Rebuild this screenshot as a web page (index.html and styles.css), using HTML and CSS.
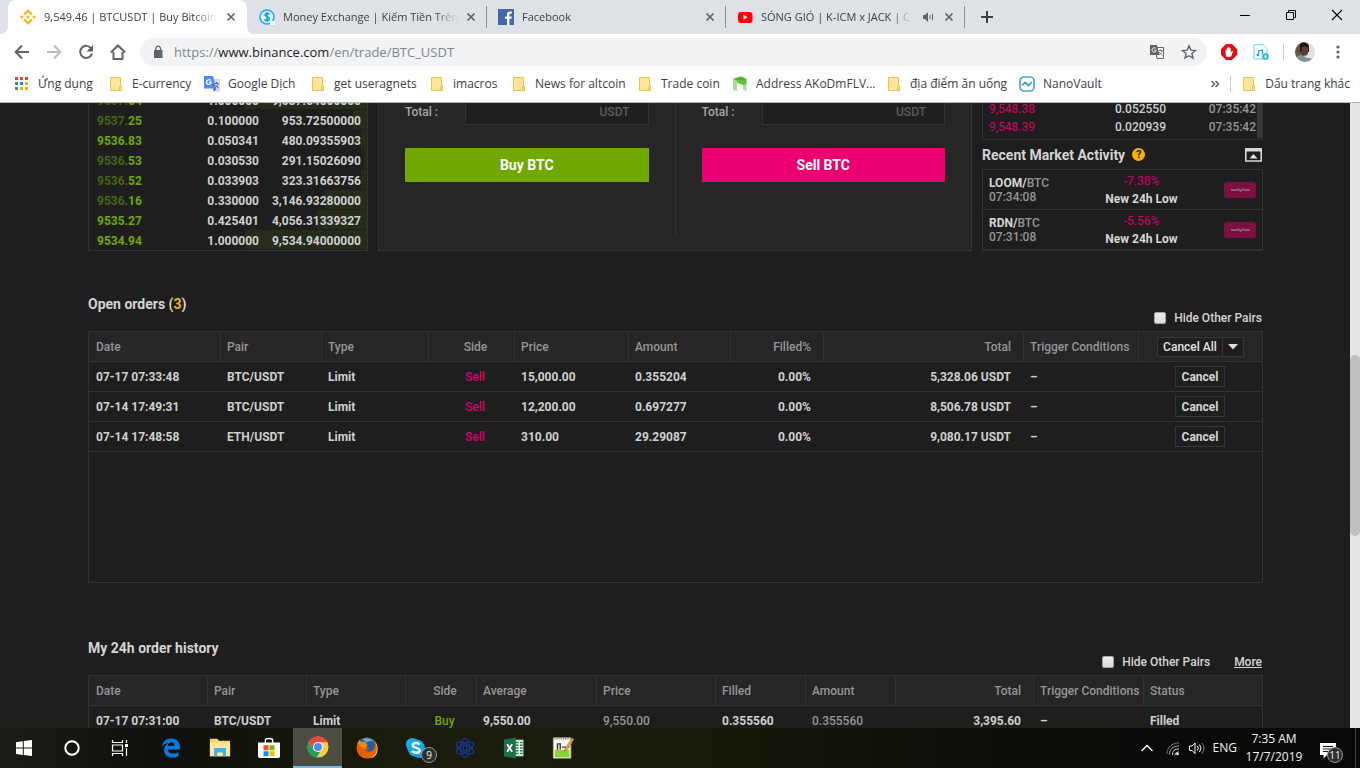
FILE: index.html
```html
<!DOCTYPE html>
<html lang="vi">
<head>
<meta charset="utf-8">
<title>9,549.46 | BTCUSDT | Buy Bitcoin</title>
<link rel="stylesheet" href="styles.css">
</head>
<body>
<svg class="defs" aria-hidden="true">
  <symbol id="close" viewBox="0 0 10 10"><path d="M1.5 1.5l7 7M8.500 1.500l-7 7" stroke="#5f6368" stroke-width="1.700"/></symbol>
  <symbol id="folder" viewBox="0 0 16 16"><path d="M2.500 1.500h10v9h1v4h-11z" fill="#ffe69a" stroke="#e9c34c"/><path d="M11.500 10.500h2v4h-2z" fill="#ffe69a" stroke="#e9c34c"/></symbol>
</svg>

<header class="browser">
  <div class="tabstrip">
    <div class="tab active">
      <svg class="i16" viewBox="0 0 16 16" fill="#f3ba2f"><path d="M8 0l4.800 4.800-1.800 1.800-3-3-3 3-1.800-1.800zM8 16l-4.800-4.800 1.800-1.800 3 3 3-3 1.800 1.800zM8 6.100l1.900 1.900L8 9.900 6.100 8zM1.900 6.100L3.800 8 1.900 9.900 0 8zM14.100 6.100L16 8l-1.900 1.900L12.200 8z"/></svg>
      <span class="tab-title">9,549.46 | BTCUSDT | Buy Bitcoin</span>
      <button class="x" aria-label="Close tab"><svg><use href="#close"/></svg></button>
    </div>
    <div class="tab">
      <svg class="i16" viewBox="0 0 16 16"><circle cx="8" cy="8" r="7" fill="#e9f7ff" stroke="#1ba7f5" stroke-width="1.500"/><path d="M10.500 5.500C9.500 4 6 4.200 6 6s4.500 1.700 4.500 3.800-4 2.200-5 .5M8 3v10" fill="none" stroke="#0b9bf0" stroke-width="1.500"/><path d="M11 12h5v4h-5z" fill="#fff"/></svg>
      <span class="tab-title">Money Exchange | Kiếm Tiền Trên</span>
      <button class="x" aria-label="Close tab"><svg><use href="#close"/></svg></button>
    </div>
    <div class="tab">
      <svg class="i16" viewBox="0 0 16 16"><path fill="#4267b2" d="M0 0h16v16H0z"/><path fill="#fff" d="M9 16V9.800H7V7.400h2V5.500C9 3.500 10.200 2.500 12 2.500h1.800v2.200h-1.200c-1 0-1.200.5-1.200 1.200v1.500h2.400l-.3 2.400h-2.100V16z"/></svg>
      <span class="tab-title">Facebook</span>
      <button class="x" aria-label="Close tab"><svg><use href="#close"/></svg></button>
    </div>
    <div class="tab">
      <svg class="i16" viewBox="0 0 16 16"><rect x="1" y="3" width="14.500" height="11" rx="3" fill="#f00"/><path d="M6.500 5.800v5l4-2.500z" fill="#fff"/></svg>
      <span class="tab-title">SÓNG GIÓ | K-ICM x JACK | C</span>
      <svg class="snd" viewBox="0 0 12 12"><path d="M1 4h2l3-3v10L3 8H1z" fill="#5f6368"/><path d="M8 4v4M10.500 3v6" stroke="#5f6368"/></svg>
      <button class="x" aria-label="Close tab"><svg><use href="#close"/></svg></button>
    </div>
    <button class="newtab" aria-label="New tab"><svg class="i16" viewBox="0 0 16 16"><path d="M8 2v12M2 8h12" stroke="#3c4043" stroke-width="2"/></svg></button>
    <div class="winctl">
      <button aria-label="Minimize"><svg viewBox="0 0 12 12"><path d="M1 6.500h10" stroke="#000"/></svg></button>
      <button aria-label="Restore"><svg viewBox="0 0 12 12"><path d="M1.500 3.500h7v7h-7zM3.500 3V1.500h7v7H9" fill="none" stroke="#000"/></svg></button>
      <button aria-label="Close"><svg viewBox="0 0 12 12"><path d="M1 1l10 10M11 1L1 11" stroke="#000" stroke-width="1.100"/></svg></button>
    </div>
  </div>

  <div class="toolbar">
    <button aria-label="Back"><svg class="i16" viewBox="0 0 16 16"><path d="M15 8H2M8 1.500L1.700 8 8 14.500" fill="none" stroke="#5f6368" stroke-width="2"/></svg></button>
    <button aria-label="Forward"><svg class="i16" viewBox="0 0 16 16"><path d="M1 8h13M8 1.500L14.300 8 8 14.500" fill="none" stroke="#babcbe" stroke-width="2"/></svg></button>
    <button aria-label="Reload"><svg class="i16" viewBox="0 0 16 16"><path d="M13.200 4.500A6 6 0 1 0 14 9.500" fill="none" stroke="#5f6368" stroke-width="2"/><path d="M15 1v6.500H8.500z" fill="#5f6368"/></svg></button>
    <button aria-label="Home"><svg class="i16" viewBox="0 0 16 16"><path d="M3.500 8v7h9V8M.8 8.500L8 1.500l7.200 7" fill="none" stroke="#5f6368" stroke-width="2"/></svg></button>
    <div class="omnibox">
      <svg class="lock" viewBox="0 0 10 14"><path d="M1 5h8.500v8H1z" fill="#5f6368"/><path d="M2.900 6V3.500a2.300 2.300 0 0 1 4.600 0V6" fill="none" stroke="#5f6368" stroke-width="1.300"/></svg>
      <span class="url">https://<b>www.binance.com</b>/en/trade/BTC_USDT</span>
      <svg class="i16" viewBox="0 0 16 16"><path d="M6 3.500h8.500v11H8z" fill="#fff" stroke="#5f6368"/><path d="M1 1h7l2.500 10H1z" fill="#5f6368"/><path d="M7 4.500C6 3.300 3 3.500 3 6s3.500 3 4.200.2H5.500" fill="none" stroke="#fff"/><path d="M9.500 6.500h4M11.500 5.500v1M13 7c-.5 2-2 3.500-3.500 4M10 8l3.500 3.500" fill="none" stroke="#5f6368" stroke-width=".9"/></svg>
      <svg class="i16" viewBox="0 0 16 16"><path d="M8 1.800l1.800 4.300 4.700.4-3.600 3 1.100 4.600L8 11.700l-4 2.400 1.100-4.600-3.600-3 4.700-.4z" fill="none" stroke="#5f6368" stroke-width="1.400"/></svg>
    </div>
    <div class="exts">
      <svg class="i16" viewBox="0 0 16 16"><path d="M5 0h6l5 5v6l-5 5H5l-5-5V5z" fill="#e40d0d"/><path d="M4.500 6.500c0-1 1.200-1 1.200 0V4.300c0-1 1.300-1 1.300 0V3.500c0-1 1.400-1 1.400 0v1c0-1 1.300-1 1.300 0v4l1-1.200c.6-.8 1.500-.2 1.200.5L10.300 12c-.8 1.500-4.600 1.500-5.300 0-.4-1-.5-3-.5-5.500z" fill="#fff"/></svg>
      <svg class="i16" viewBox="0 0 16 16"><path d="M1 .7h9l4 4V15H1z" fill="#f4fdff" stroke="#6ad4ee"/><path d="M5.500 11V7l4-1v4" fill="none" stroke="#16a9d8" stroke-width="1.200"/><circle cx="4.800" cy="11" r="1.300" fill="#16a9d8"/><circle cx="12.500" cy="12.500" r="3.300" fill="#16bce8"/><path d="M12.500 14.500l-2-2h1.300V11h1.400v1.500h1.300z" fill="#fff"/></svg>
      <i class="sep"></i>
      <svg class="avatar" viewBox="0 0 20 20"><clipPath id="av"><circle cx="10" cy="10" r="10"/></clipPath><g clip-path="url(#av)"><path fill="#e6e0d8" d="M0 0h20v20H0z"/><path d="M0 0h9v15H0z" fill="#665544"/><path d="M5 2c2-3 9-2 9 3v5H5z" fill="#1d1513"/><path d="M6.500 6c1-2 6-2 6.500 0v5c0 3-5 4-6.500 1z" fill="#5d3d33"/><path d="M1 20c0-7 4-8 7-6.500l3 2 5 1 4 5z" fill="#7d929b"/></g></svg>
      <button aria-label="Menu"><svg class="i16" viewBox="0 0 16 16" fill="#5f6368"><circle cx="8" cy="3" r="1.600"/><circle cx="8" cy="8" r="1.600"/><circle cx="8" cy="13" r="1.600"/></svg></button>
    </div>
  </div>

  <nav class="bookmarks">
    <div class="marks">
      <a href="#"><svg class="i16" viewBox="0 0 16 16"><path d="M1 1h3v3H1zM6 1h3v3H6zM11 1h3v3h-3z" fill="#ea4335"/><path d="M1 6h3v3H1zM1 11h3v3H1z" fill="#34a153"/><path d="M6 6h3v3H6z" fill="#1a84f5"/><path d="M11 6h3v3h-3zM6 11h3v3H6zM11 11h3v3h-3z" fill="#fbb008"/></svg>Ứng dụng</a>
      <a href="#"><svg class="i16"><use href="#folder"/></svg>E-currency</a>
      <a href="#"><svg class="i16" viewBox="0 0 16 16"><path d="M7 3h9v12.500H9z" fill="#d8d8d8"/><path d="M0 0h9l3 12.500H0z" fill="#4a8af4"/><path d="M9.500 12.500h3L10 15.500z" fill="#2a56c6"/><path d="M7 4.500C5.500 3 2.500 3.600 2.500 6.200S6.600 9.500 7.200 6.400H5" fill="none" stroke="#fff" stroke-width="1.200"/><path d="M10.500 7.500h4M12.500 6v1.500M14 8c-.5 2-1.500 3-2.500 3.500M11.500 9l3 3" fill="none" stroke="#667"/></svg>Google Dịch</a>
      <a href="#"><svg class="i16"><use href="#folder"/></svg>get useragnets</a>
      <a href="#"><svg class="i16"><use href="#folder"/></svg>imacros</a>
      <a href="#"><svg class="i16"><use href="#folder"/></svg>News for altcoin</a>
      <a href="#"><svg class="i16"><use href="#folder"/></svg>Trade coin</a>
      <a href="#"><svg class="i16" viewBox="0 0 16 16"><path d="M1 3l8-2.500L14.500 3v12l-3.500-1.500V8L5 6.500V15l-4-1z" fill="#a9dd93"/><path d="M1 3l8-2.500L14.500 3 11 5 5 4.500z" fill="#4fb32a"/><path d="M5 4.500L11 5l3.500-2v5L11 9 5 6.500z" fill="#5fc238"/></svg>Address AKoDmFLV...</a>
      <a href="#"><svg class="i16"><use href="#folder"/></svg>địa điểm ăn uống</a>
      <a href="#"><svg class="i16" viewBox="0 0 16 16"><rect x="1" y="1" width="14" height="14" rx="4" fill="#fff" stroke="#4aa9c9" stroke-width="1.700"/><path d="M3 9.500l3-3 3.500 3 3.500-3.500" fill="none" stroke="#3a9fc2" stroke-width="1.700"/></svg>NanoVault</a>
    </div>
    <button class="more-marks" aria-label="More bookmarks"><svg viewBox="0 0 10 10"><path d="M1.500 2l3 3-3 3M5.500 2l3 3-3 3" fill="none" stroke="#5f6368" stroke-width="1.500"/></svg></button>
    <i class="sep"></i>
    <a href="#"><svg class="i16"><use href="#folder"/></svg>Dấu trang khác</a>
  </nav>
</header>

<div class="viewport">
<main class="page">
  <section class="top">
    <div class="panel book">
      <div class="bid" style="background-size:44% 100%"><span class="px"><s>9537.</s>64</span><span>1.000000</span><span>9,537.64000000</span></div>
      <div class="bid" style="background-size:5% 100%"><span class="px"><s>9537.</s>25</span><span>0.100000</span><span>953.72500000</span></div>
      <div class="bid" style="background-size:2% 100%"><span class="px">9536.83</span><span>0.050341</span><span>480.09355903</span></div>
      <div class="bid" style="background-size:1% 100%"><span class="px"><s>9536.</s>53</span><span>0.030530</span><span>291.15026090</span></div>
      <div class="bid" style="background-size:2% 100%"><span class="px"><s>9536.</s>52</span><span>0.033903</span><span>323.31663756</span></div>
      <div class="bid" style="background-size:15% 100%"><span class="px"><s>9536.</s>16</span><span>0.330000</span><span>3,146.93280000</span></div>
      <div class="bid" style="background-size:18% 100%"><span class="px">9535.27</span><span>0.425401</span><span>4,056.31339327</span></div>
      <div class="bid" style="background-size:44% 100%"><span class="px">9534.94</span><span>1.000000</span><span>9,534.94000000</span></div>
    </div>

    <div class="panel trade">
      <form class="order">
        <div class="field"><label for="buy-total">Total :</label><input id="buy-total" type="text" placeholder="USDT"></div>
        <button type="button" class="buy">Buy BTC</button>
      </form>
      <i class="divider"></i>
      <form class="order">
        <div class="field"><label for="sell-total">Total :</label><input id="sell-total" type="text" placeholder="USDT"></div>
        <button type="button" class="sell">Sell BTC</button>
      </form>
    </div>

    <div class="side">
      <div class="panel trades">
        <div class="fills">
          <div><span class="red">9,548.38</span><span>0.052550</span><time>07:35:42</time></div>
          <div><span class="red">9,548.39</span><span>0.020939</span><time>07:35:42</time></div>
        </div>
        <i class="bar"></i>
      </div>
      <div class="side-head">
        <h2>Recent Market Activity</h2>
        <span class="help">?</span>
        <button aria-label="Collapse"><svg viewBox="0 0 17 14"><path d="M.8 1h15.400v12H.8z" fill="none" stroke="#d6d6d6" stroke-width="1.600"/><path d="M0 0h17v3.500H0z" fill="#d6d6d6"/><path d="M4.500 10.500l4-4.500 4 4.500z" fill="#e6e6e6"/></svg></button>
      </div>
      <div class="panel activity">
        <div class="act"><p><b>LOOM/</b>BTC<br>07:34:08</p><p class="mid"><span class="red">-7.38%</span><b>New 24h Low</b></p><svg class="badge" viewBox="0 0 32 16"><rect width="32" height="16" rx="3" fill="#7b1041"/><path d="M7 8h6l1.500-1 2 2.500 2-2.500L20 8h6" fill="none" stroke="#8f7480" stroke-width="1.300"/></svg></div>
        <div class="act"><p><b>RDN/</b>BTC<br>07:31:08</p><p class="mid"><span class="red">-5.56%</span><b>New 24h Low</b></p><svg class="badge" viewBox="0 0 32 16"><rect width="32" height="16" rx="3" fill="#7b1041"/><path d="M7 8h6l1.500-1 2 2.500 2-2.500L20 8h6" fill="none" stroke="#8f7480" stroke-width="1.300"/></svg></div>
      </div>
    </div>
  </section>

  <section class="orders">
    <div class="head">
      <h2>Open orders (<em>3</em>)</h2>
      <div class="tools"><label><input type="checkbox">Hide Other Pairs</label></div>
    </div>
    <div class="panel box">
      <table>
        <colgroup><col class="w131"><col class="w101"><col class="w107"><col class="w86"><col class="w114"><col class="w102"><col class="w93"><col class="w200"><col class="w115"><col></colgroup>
        <thead><tr><th>Date</th><th>Pair</th><th>Type</th><th class="c">Side</th><th>Price</th><th>Amount</th><th class="r">Filled%</th><th class="r">Total</th><th>Trigger Conditions</th><th class="act-col"><div class="split"><button>Cancel All</button><button aria-label="Cancel options"><svg viewBox="0 0 10 6"><path d="M0 0h10L5 5.500z" fill="#e0e0e0"/></svg></button></div></th></tr></thead>
        <tbody>
          <tr><td>07-17 07:33:48</td><td>BTC/USDT</td><td>Limit</td><td class="c red">Sell</td><td>15,000.00</td><td>0.355204</td><td class="r">0.00%</td><td class="r">5,328.06 USDT</td><td>–</td><td class="act-col"><button class="cancel">Cancel</button></td></tr>
          <tr><td>07-14 17:49:31</td><td>BTC/USDT</td><td>Limit</td><td class="c red">Sell</td><td>12,200.00</td><td>0.697277</td><td class="r">0.00%</td><td class="r">8,506.78 USDT</td><td>–</td><td class="act-col"><button class="cancel">Cancel</button></td></tr>
          <tr><td>07-14 17:48:58</td><td>ETH/USDT</td><td>Limit</td><td class="c red">Sell</td><td>310.00</td><td>29.29087</td><td class="r">0.00%</td><td class="r">9,080.17 USDT</td><td>–</td><td class="act-col"><button class="cancel">Cancel</button></td></tr>
        </tbody>
      </table>
    </div>
  </section>

  <section class="orders history">
    <div class="head">
      <h2>My 24h order history</h2>
      <div class="tools"><label><input type="checkbox">Hide Other Pairs</label><a href="#">More</a></div>
    </div>
    <div class="panel box">
      <table>
        <colgroup><col class="w118"><col class="w99"><col class="w99"><col class="w71"><col class="w120"><col class="w119"><col class="w90"><col class="w90"><col class="w138"><col class="w110"><col></colgroup>
        <thead><tr><th>Date</th><th>Pair</th><th>Type</th><th class="c">Side</th><th>Average</th><th>Price</th><th>Filled</th><th>Amount</th><th class="r">Total</th><th>Trigger Conditions</th><th>Status</th></tr></thead>
        <tbody><tr><td>07-17 07:31:00</td><td>BTC/USDT</td><td>Limit</td><td class="c green">Buy</td><td>9,550.00</td><td class="dim">9,550.00</td><td>0.355560</td><td class="dim">0.355560</td><td class="r">3,395.60</td><td>–</td><td>Filled</td></tr></tbody>
      </table>
    </div>
  </section>
</main>
<div class="scrollbar"><i></i></div>
</div>

<footer class="taskbar">
  <div class="system">
    <button aria-label="Start"><svg viewBox="0 0 24 24" fill="#fff"><path d="M4 6.200l6.800-1v6.300H4zM11.800 5L20 4v7.500h-8.200zM4 12.500h6.800v6.400L4 18zM11.800 12.500H20V20l-8.200-1z"/></svg></button>
    <button aria-label="Cortana"><svg viewBox="0 0 24 24"><circle cx="12" cy="12" r="6.700" fill="none" stroke="#fff" stroke-width="2"/></svg></button>
    <button aria-label="Task view"><svg viewBox="0 0 24 24"><path d="M4.500 4v2.500h10V4M4.500 20v-2.500h10V20M4.500 9h10v6h-10zM18.500 4v3M18.500 12v8" fill="none" stroke="#fff" stroke-width="1.200"/><path d="M17 8h3v3h-3z" fill="#fff"/></svg></button>
  </div>
  <div class="apps">
    <button aria-label="Edge"><svg viewBox="0 0 24 24"><path d="M2 11C3 4 7.500 1.500 12 1.500c7 0 10 5 9.800 9.500v2.500H8.500c.3 5 7.500 5.700 11.500 3v4.500c-6 3.200-15.500 1.500-15.500-6.500 0-4.500 3-7 5-8C5 6.800 3 9 2 11zm6.500-1.500h7.300c0-5.500-6.800-4.500-7.300 0z" fill="#0a7bdc"/></svg></button>
    <button aria-label="Explorer"><svg viewBox="0 0 24 24"><path d="M1 2h8l2 2h12v17H1z" fill="#f7d367"/><path d="M1 6h22v15H1z" fill="#ffe8a0"/><path d="M5.500 21v-9h13v9h-3.500v-4h-6v4z" fill="#3fb4ea"/></svg></button>
    <button aria-label="Store"><svg viewBox="0 0 24 24"><path d="M8 7V3.500C8 1 16 1 16 3.500V7" fill="none" stroke="#fff" stroke-width="1.500"/><path d="M0 6h24v15q0 2-2 2H2q-2 0-2-2z" fill="#fff"/><path d="M6 9h5.500v5.500H6z" fill="#f35325"/><path d="M12.500 9H18v5.500h-5.500z" fill="#7fba00"/><path d="M6 15.500h5.500V21H6z" fill="#0a9be8"/><path d="M12.500 15.500H18V21h-5.500z" fill="#ffba08"/></svg></button>
    <button class="current" aria-label="Chrome"><svg viewBox="0 0 24 24"><circle cx="12" cy="12" r="11.500" fill="#ffcd42"/><path d="M2 6.300A11.500 11.500 0 0 1 22.200 6.700H12L7 14.500z" fill="#de4b3e"/><path d="M2 6.300L7 15l5 2.500 2.500-.5-4 6.400A11.500 11.500 0 0 1 2 6.300z" fill="#1da261"/><circle cx="12" cy="12" r="5.400" fill="#fff"/><circle cx="12" cy="12" r="4.300" fill="#4a8af4"/></svg></button>
    <button aria-label="Firefox"><svg viewBox="0 0 24 24"><circle cx="12" cy="12" r="11.500" fill="#e66000"/><path d="M20 5c5 6 3 16-6 18 4 .5 8-2 9.300-7 .7-5 0-8-3.300-11z" fill="#ffcb2e"/><path d="M4 4C8-.5 16-.5 20 4.500c1 3 1 7-1 9.500-3 3-7 2.500-9 0 2 .5 3-.5 4-1.500-1-1-2.500-1.500-2-3l1-2C10 6 7 5 4 4z" fill="#1f5f9f"/><path d="M7 3c4-3 10-1.500 12 2-3-1-5-1-7 1z" fill="#5fb2e4"/><path d="M1.500 7L3.500 3 6 6c2-1 4-1 5 0-.5 2 .5 2.500 1.500 3-1 1.500-3 2-3 4" fill="#f08a1c"/></svg></button>
    <button class="badged" aria-label="Skype"><svg viewBox="0 0 24 24"><circle cx="8" cy="8" r="7" fill="#1baee9"/><circle cx="16" cy="16" r="7" fill="#0d9fdf"/><circle cx="12" cy="12" r="9.500" fill="#12a8e6"/><path d="M16 8.300c-1.500-2.600-7.600-2.300-7.600.8 0 3.600 7.700 2 7.700 5.600 0 3.300-6.800 3.200-8.300.2" fill="none" stroke="#fff" stroke-width="2.500"/></svg><span class="count">9</span></button>
    <button aria-label="Daedalus"><svg viewBox="0 0 24 24" fill="none" stroke="#123a9c" stroke-width="1.300"><ellipse cx="12" cy="12" rx="10.500" ry="4.800" transform="rotate(30 12 12)"/><ellipse cx="12" cy="12" rx="10.500" ry="4.800" transform="rotate(90 12 12)"/><ellipse cx="12" cy="12" rx="10.500" ry="4.800" transform="rotate(150 12 12)"/><ellipse cx="12" cy="12" rx="2" ry="3"/></svg></button>
    <button aria-label="Excel"><svg viewBox="0 0 24 24"><path d="M12 3h10.500v18H12z" fill="#fff" stroke="#217346"/><path d="M14 6h3M14 9h3M14 12h3M14 15h3M14 18h3M18.500 6h3M18.500 9h3M18.500 12h3M18.500 15h3M18.500 18h3" stroke="#217346" stroke-width="1.800"/><path d="M1 3l13-2.500v23L1 21z" fill="#1d7044"/><path d="M4.500 8l5.500 8M10 8l-5.500 8" stroke="#fff" stroke-width="2"/></svg></button>
    <button aria-label="Notepad++"><svg viewBox="0 0 24 24"><path d="M1.500 1h19v22h-19z" fill="#f4f6ea" stroke="#bcc4a0"/><path d="M3 14h16v8H3z" fill="#8bd436"/><path d="M2 2h18" stroke="#777" stroke-width="1.500" stroke-dasharray="1 1"/><path d="M6 7v7M6 7.500h3v6M11 11h4M15.500 11H19" stroke="#333" fill="none" stroke-width="1.500"/><path d="M22 1l2 1.500-8 12-2.500 1.500.5-3z" fill="#f0a437" stroke="#9a5c1b" stroke-width=".6"/></svg></button>
  </div>
  <div class="tray">
    <svg class="i16" viewBox="0 0 16 16"><path d="M2.500 11L8 5.500l5.500 5.500" fill="none" stroke="#fff" stroke-width="1.400"/></svg>
    <svg class="i16" viewBox="0 0 16 16" fill="none" stroke="#ddd"><path d="M2 14C2 7 7 3 14 3" stroke="#777"/><path d="M4.500 14.500C4.500 9 8 6 14 6" stroke="#aaa"/><path d="M7.500 15c0-4 2-6 6.500-6M10 15c0-2 1.500-3 4-3"/><circle cx="12.500" cy="14" r="1.300" fill="#fff" stroke="none"/></svg>
    <svg class="i16" viewBox="0 0 16 16" fill="none" stroke="#fff"><path d="M.5 6h2.500l3-3v10.500L3 10.500H.5z"/><path d="M8.500 6q1.500 2 0 4.500M10.500 4.500q3 3.500 0 7.500"/><path d="M13 3q4 5 0 10.500" stroke="#888"/></svg>
    <span>ENG</span>
    <time class="clock">7:35 AM<br>17/7/2019</time>
    <button class="badged" aria-label="Notifications"><svg viewBox="0 0 20 20"><path d="M1 2h16v12H8l-3.500 3.500V14H1z" fill="#fff"/><path d="M4 5.500h10M4 8h10M4 10.500h7" stroke="#111"/></svg><span class="count">11</span></button>
  </div>
</footer>
</body>
</html>
```

FILE: styles.css
```css
* { box-sizing: border-box; }
body {
  margin: 0;
  height: 100vh;
  display: flex;
  flex-direction: column;
  overflow: hidden;
  background: #1e1e1e;
  color: #d0d0d0;
  font: 500 12px/16px Roboto, "Liberation Sans", sans-serif;
}
button { padding: 0; border: 0; background: none; color: inherit; font: inherit; }
a { color: inherit; text-decoration: none; }
h2, p { margin: 0; }
svg { display: block; flex: none; }
.defs { display: none; }
.i16 { width: 16px; height: 16px; }
.red { color: #d6006c; font-weight: 400; }
.green { color: #70a800; }

/* Browser chrome */
.browser, .taskbar { flex: none; font-family: "Open Sans", "Noto Sans", sans-serif; font-weight: 400; }
.browser { background: #fff; color: #3c4043; border-bottom: 1px solid #b6b4b6; }
.tabstrip { display: flex; height: 34px; padding-left: 8px; background: #dee1e6; }
.tab {
  flex: 0 1 239px;
  min-width: 0;
  display: flex;
  align-items: center;
  padding: 0 10px 0 11px;
  border-right: 1px solid transparent;
  border-image: linear-gradient(transparent 7px, #8b8e93 7px, #8b8e93 27px, transparent 27px) 1;
}
.tab.active { position: relative; margin-right: 1px; padding-left: 12px; background: #fff; border-image: none; border-radius: 8px 8px 0 0; }
.tab.active::before, .tab.active::after { content: ""; position: absolute; bottom: 0; width: 8px; height: 8px; }
.tab.active::before { left: -8px; background: radial-gradient(circle at 0 0, transparent 8px, #fff 8px); }
.tab.active::after { right: -9px; background: radial-gradient(circle at 100% 0, transparent 8px, #fff 8px); }
.tab-title {
  flex: 1;
  margin-left: 8px;
  margin-right: 8px;
  overflow: hidden;
  white-space: nowrap;
  font-size: 11px;
  -webkit-mask-image: linear-gradient(90deg, #000 calc(100% - 24px), transparent);
  mask-image: linear-gradient(90deg, #000 calc(100% - 24px), transparent);
}
.x svg { width: 10px; height: 10px; }
.snd { width: 12px; height: 12px; margin-right: 10px; }
.newtab { padding: 0 14px; }
.winctl { margin-left: auto; display: flex; align-items: flex-start; }
.winctl button { width: 46px; height: 29px; display: grid; place-items: center; }
.winctl svg { width: 12px; height: 12px; }

.toolbar { display: flex; align-items: center; height: 36px; padding: 0 14px; gap: 16px; }
.omnibox {
  flex: 1;
  display: flex;
  align-items: center;
  gap: 16px;
  height: 28px;
  margin-left: -2px;
  padding: 0 10px 0 13px;
  border-radius: 14px;
  background: #f1f3f4;
}
.lock { width: 10px; height: 14px; margin-right: -5px; }
.url { flex: 1; font-size: 13px; line-height: 20px; color: #80868b; }
.url b { font-weight: 400; color: #202124; }
.exts { display: flex; align-items: center; gap: 16px; margin-left: -2px; }
.sep { width: 1px; height: 16px; background: #c9ccd0; }
.exts .sep { margin-left: -2px; }
.avatar { width: 20px; height: 20px; margin: 0 -1px 0 -5px; }

.bookmarks { display: flex; align-items: center; height: 32px; padding: 0 10px 4px 14px; }
.bookmarks a { display: flex; align-items: center; gap: 8px; white-space: nowrap; }
.marks {
  flex: 1;
  display: grid;
  grid-template-columns: 94px 96px 106px 119px 82px 126px 95px 154px 133px 100px;
}
.more-marks { margin-right: 10px; }
.more-marks svg { width: 10px; height: 10px; }
.bookmarks .sep { margin-right: 10px; }

/* Web page */
.viewport { flex: 1; min-height: 0; display: flex; }
.page { flex: 1; min-width: 0; padding: 0 87px 0 88px; overflow: hidden; }
.scrollbar { width: 10px; display: grid; grid-template-rows: 252fr 181fr 192fr; background: #e6e6e6; }
.scrollbar i { grid-row: 2; border-radius: 5px; background: #bfbfbf; }
.panel { border: 1px solid #333; }
.top { height: 148px; display: grid; grid-template-columns: 280px 1fr 281px; gap: 10px; overflow: hidden; }
.top > * { min-height: 0; overflow: hidden; border-top: 0; }

.book { display: flex; flex-direction: column; justify-content: flex-end; }
.bid {
  flex: none;
  display: grid;
  grid-template-columns: 62px 1fr 102px;
  height: 20px;
  padding: 0 6px 0 8px;
  border-bottom: 1px solid #1e1e1e;
  line-height: 22px;
  text-align: right;
  background: linear-gradient(#262c1b, #262c1b) right / 10% no-repeat;
}
.px { text-align: left; color: #70a800; }
.px s { text-decoration: none; color: #48641a; }

.trade { display: flex; background: #262626; }
.order { flex: 1 1 0; min-width: 0; display: flex; flex-direction: column; justify-content: flex-end; gap: 23px; padding: 0 26px 68px; }
.order > * { flex: none; }
.field { display: flex; align-items: center; }
.field label { flex: 0 0 60px; color: #a8a8a8; }
.field input {
  flex: 1;
  min-width: 0;
  height: 26px;
  padding: 0 18px;
  border: 1px solid #333;
  background: #1e1e1e;
  color: #ccc;
  font: inherit;
  text-align: right;
}
.field input::placeholder { color: #5c5c5c; }
.buy, .sell { height: 34px; color: #fff; font-size: 14px; font-weight: 700; }
.buy { background: #70a800; }
.sell { background: #ea0070; }
.divider { flex: none; width: 1px; margin-bottom: 14px; background: #333; }

.side { display: flex; flex-direction: column; justify-content: flex-end; }
.trades { flex: none; display: flex; border-top: 0; }
.fills { flex: 1; padding-bottom: 3px; }
.fills div { display: grid; grid-template-columns: 64px 1fr 90px; height: 18px; padding: 0 1px 0 6px; line-height: 18px; }
.fills div > :nth-child(n+2) { text-align: right; }
.fills time, .act { color: #969696; }
.trades .bar { width: 5px; margin-bottom: 1px; background: #383838; }
.side-head { flex: none; display: flex; align-items: center; gap: 7px; height: 29px; padding-right: 1px; }
.side-head svg { width: 17px; height: 14px; }
.side-head button { margin-left: auto; }
.help { width: 13px; height: 13px; border-radius: 50%; background: #f7b500; color: #1e1e1e; font-size: 11px; font-weight: 700; line-height: 13px; text-align: center; }
.activity { flex: none; }
.act { display: grid; grid-template-columns: 108px 1fr 70px; align-items: center; height: 40px; padding: 0 6px; border-bottom: 1px solid #333; line-height: 14px; }
.act b { color: #d6d6d6; font-weight: 700; }
.mid { display: flex; flex-direction: column; text-align: center; white-space: nowrap; line-height: 18px; }
.badge { width: 32px; height: 16px; justify-self: end; }

h2 { color: #d4d4d4; font-size: 14px; font-weight: 700; line-height: 20px; }
h2 em { font-style: normal; color: #f7b500; }
.orders { padding-top: 43px; }
.history { padding-top: 55px; }
.head { display: flex; justify-content: space-between; align-items: flex-start; height: 37px; }
.tools { display: flex; gap: 24px; margin-top: 16px; padding-right: 1px; color: #d4d4d4; }
.tools label { display: flex; align-items: center; gap: 8px; }
.tools a { text-decoration: underline; }
.tools input { appearance: none; width: 12px; height: 12px; margin: 0; border: 1px solid #a6a6a6; border-radius: 2px; background: linear-gradient(#eee, #dadada); }
.box { height: 252px; }
table { width: 100%; table-layout: fixed; border-collapse: separate; border-spacing: 0; }
th, td { height: 30px; padding: 0 0 0 7px; border-bottom: 1px solid #333; text-align: left; white-space: nowrap; font-weight: 500; }
th { background: #262626; color: #969696; }
th + th { border-left: 1px solid #333; padding-left: 6px; }
td, .bid { font-weight: 700; }
td.red, td.dim, td.green { font-weight: 500; }
.c { text-align: center; padding-left: 8px; }
.r { text-align: right; padding-right: 12px; }
.dim { color: #969696; }
.act-col, th.act-col { padding: 0; text-align: center; }
.cancel { height: 21px; padding: 0 6px; border: 1px solid #383838; color: #d6d6d6; }
.split { display: flex; justify-content: center; color: #e0e0e0; }
.split button { height: 20px; padding: 0 5px; border: 1px solid #383838; background: #1e1e1e; }
.split button + button { border-left: 0; }
.split svg { width: 10px; height: 6px; }
.w71 { width: 71px; } .w86 { width: 86px; } .w90 { width: 90px; } .w93 { width: 93px; }
.w99 { width: 99px; } .w101 { width: 101px; } .w102 { width: 102px; } .w107 { width: 107px; }
.w110 { width: 110px; } .w114 { width: 114px; } .w115 { width: 115px; } .w118 { width: 118px; }
.w119 { width: 119px; } .w120 { width: 120px; } .w131 { width: 131px; } .w138 { width: 138px; } .w200 { width: 200px; }

/* Taskbar */
.taskbar { display: flex; height: 40px; background: linear-gradient(90deg, #1b1c16, #0e100a 12%, #1b1c0c 30%, #191a0c 50%, #0a0c08 75%, #080908); color: #f2f2f2; }
.system, .apps, .tray { display: flex; }
.system { margin-right: 2px; }
.system button, .apps button { width: 48px; display: grid; place-items: center; }
.apps button { width: 49px; }
.system svg { width: 24px; height: 24px; }
.apps svg { width: 22px; height: 22px; }
.apps .current { background: #4b4c42; border-bottom: 2px solid #76b9ed; }
.tray { margin-left: auto; align-items: center; gap: 8px; padding-right: 12px; margin-right: 4px; border-right: 1px solid #44453f; }
.tray .i16:first-child { margin-right: 2px; }
.clock { width: 58px; line-height: 18px; text-align: center; }
.badged { position: relative; }
.tray .badged { width: 32px; height: 30px; padding: 5px 0 0 8px; }
.tray .badged svg { width: 20px; height: 20px; }
.count { position: absolute; right: 3px; bottom: 5px; width: 16px; height: 16px; border: 1px solid #999; border-radius: 50%; background: #2e2f2d; font-size: 10px; line-height: 14px; text-align: center; }
.tray .count { right: 0; bottom: 0; }
```
